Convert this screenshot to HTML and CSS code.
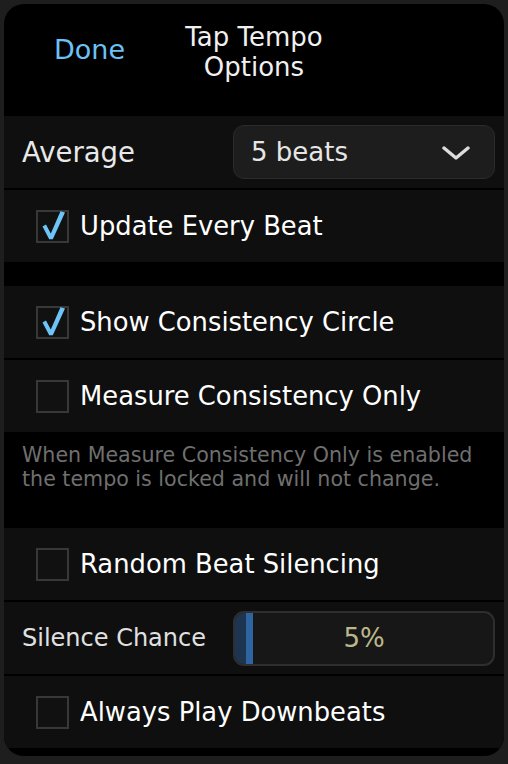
FILE: index.html
```html
<!DOCTYPE html>
<html lang="en">
<head>
  <meta charset="UTF-8" />
  <title>Tap Tempo Options</title>
  <meta name="viewport" content="width=device-width, initial-scale=1.0" />
  <link rel="stylesheet" href="styles.css">
</head>
<body>
  <div class="panel">

    <!-- Header -->
    <div class="header">
      <div class="done">Done</div>
      <div class="title">Tap Tempo<br>Options</div>
      <div></div>
    </div>

    <!-- Averaging -->
    <div class="group">
      <div class="row">
        <div class="label">Average</div>
        <div class="select">
          <span>5 beats</span>
          <svg class="chevron" viewBox="0 0 28 14" width="28" height="14">
            <path d="M2 2 L14 12 L26 2" fill="none" stroke="#dcdcdc" stroke-width="3.4" stroke-linecap="round" stroke-linejoin="round"/>
          </svg>
        </div>
      </div>
      <div class="row">
        <span class="check on"></span>
        <div class="check-label">Update Every Beat</div>
      </div>
    </div>

    <div class="spacer"></div>

    <!-- Consistency -->
    <div class="group">
      <div class="row">
        <span class="check on"></span>
        <div class="check-label">Show Consistency Circle</div>
      </div>
      <div class="row">
        <span class="check"></span>
        <div class="check-label">Measure Consistency Only</div>
      </div>
    </div>

    <div class="note">When Measure Consistency Only is enabled<br>the tempo is locked and will not change.</div>

    <!-- Silencing -->
    <div class="group">
      <div class="row">
        <span class="check"></span>
        <div class="check-label">Random Beat Silencing</div>
      </div>
      <div class="row">
        <div class="label small">Silence Chance</div>
        <div class="slider">
          <div class="slider-fill" style="width: 11px"></div>
          <div class="slider-thumb"></div>
          <div class="slider-value">5%</div>
        </div>
      </div>
      <div class="row">
        <span class="check"></span>
        <div class="check-label">Always Play Downbeats</div>
      </div>
    </div>

  </div>

  <script>
    // draw the tick inside every checked box
    const tick = '<svg viewBox="0 0 33 33" width="33" height="33"><path d="M6.5 16.5 L10 14.5 L14.8 23.5 L24.5 1.2 L29 2.6 L16.8 29.2 L13.2 29.2 Z" fill="#6cc4f8"/></svg>';
    document.querySelectorAll('.check.on').forEach(el => {
      el.innerHTML = tick;
    });
  </script>
</body>
</html>
```

FILE: styles.css
```css
body {
  margin: 0;
  background: #1e1e1e;
  font-family: "DejaVu Sans", Verdana, sans-serif;
  color: #fff;
}

.panel {
  margin: 4px;
  width: 500px;
  height: 752px;
  background: #000;
  border-radius: 20px;
  overflow: hidden;
  display: flex;
  flex-direction: column;
}

.header {
  height: 112px;
  box-sizing: border-box;
  padding-top: 18px;
  display: grid;
  grid-template-columns: 1fr auto 1fr;
  align-items: start;
}

.done {
  color: #6cc2f7;
  font-size: 27px;
  line-height: 30px;
  padding-left: 50px;
  margin-top: 13px;
}

.title {
  color: #f0f0f0;
  font-size: 26px;
  line-height: 30px;
  text-align: center;
}

.group {
  display: flex;
  flex-direction: column;
  gap: 2px;
}

.row {
  height: 72px;
  background: #0f0f0f;
  display: flex;
  align-items: center;
  padding: 0 9px 0 18px;
}

.label {
  flex: 1;
  font-size: 27.5px;
  color: #e8e8e8;
}

.label.small {
  font-size: 24px;
  color: #e0e0e0;
}

.select {
  width: 262px;
  height: 54px;
  box-sizing: border-box;
  background: #1d1d1d;
  border: 1px solid #2b2b2b;
  border-radius: 11px;
  display: flex;
  align-items: center;
  justify-content: space-between;
  padding: 0 24px 0 17px;
  font-size: 26px;
  color: #e6e6e6;
}

.chevron {
  margin-top: 2px;
}

.check {
  position: relative;
  width: 33px;
  height: 33px;
  box-sizing: border-box;
  border: 2px solid #383838;
  background: #111;
  margin-left: 14px;
  margin-right: 11px;
  flex-shrink: 0;
}

.check svg {
  position: absolute;
  left: -2px;
  top: -2px;
}

.check-label {
  font-size: 25.8px;
  color: #fff;
}

.spacer {
  height: 24px;
}

.note {
  height: 96px;
  box-sizing: border-box;
  padding: 11px 18px 0;
  font-size: 20.6px;
  line-height: 24px;
  color: #6f6f6f;
}

.slider {
  position: relative;
  width: 262px;
  height: 55px;
  box-sizing: border-box;
  background: #171717;
  border: 2px solid #2e2e2e;
  border-radius: 11px;
  overflow: hidden;
  display: flex;
  align-items: stretch;
}

.slider-fill {
  background: #1d3550;
}

.slider-thumb {
  width: 7px;
  background: #2e64a0;
}

.slider-value {
  position: absolute;
  left: 0;
  right: 0;
  top: 0;
  bottom: 0;
  display: flex;
  align-items: center;
  justify-content: center;
  font-size: 26px;
  color: #bcb78b;
}
```
